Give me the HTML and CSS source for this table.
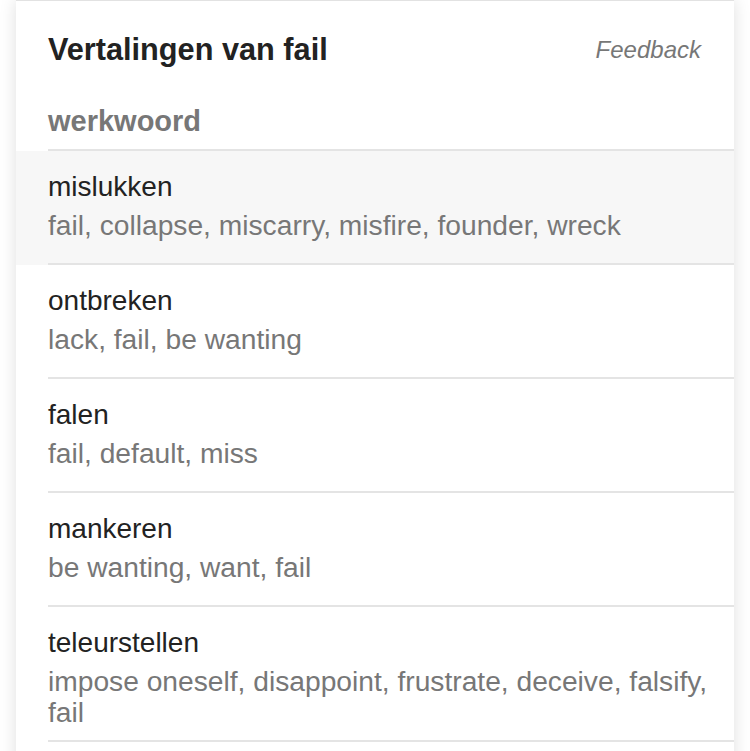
FILE: index.html
```html
<!DOCTYPE html>
<html lang="nl">
<head>
<meta charset="utf-8">
<title>Vertalingen van fail</title>
<link rel="stylesheet" href="styles.css">
</head>
<body>
<div class="page">
  <section class="card">
    <header class="card-head">
      <h1 class="title">Vertalingen van fail</h1>
      <a class="feedback">Feedback</a>
    </header>
    <div class="pos"><div class="pos-label">werkwoord</div></div>
    <ul class="list">
      <li class="row active"><div class="row-inner"><div class="term">mislukken</div><div class="trans">fail, collapse, miscarry, misfire, founder, wreck</div></div></li>
      <li class="row"><div class="row-inner"><div class="term">ontbreken</div><div class="trans">lack, fail, be wanting</div></div></li>
      <li class="row"><div class="row-inner"><div class="term">falen</div><div class="trans">fail, default, miss</div></div></li>
      <li class="row"><div class="row-inner"><div class="term">mankeren</div><div class="trans">be wanting, want, fail</div></div></li>
      <li class="row"><div class="row-inner"><div class="term">teleurstellen</div><div class="trans">impose oneself, disappoint, frustrate, deceive, falsify, fail</div></div></li>
    </ul>
  </section>
</div>
</body>
</html>
```

FILE: styles.css
```css
html, body {
  margin: 0;
  padding: 0;
  background: #fff;
}
body {
  font-family: "Liberation Sans", Arial, Helvetica, sans-serif;
  color: #222;
}
.page {
  padding: 0 16px;
  height: 751px;
  overflow: hidden;
}
.card {
  background: #fff;
  border-top: 1px solid #e2e2e2;
  box-shadow: 0 0 16px rgba(0, 0, 0, 0.13);
  min-height: 800px;
}
.card-head {
  display: flex;
  justify-content: space-between;
  align-items: center;
  padding: 31px 33px 0 32px;
}
.title {
  margin: 0;
  font-size: 30.7px;
  line-height: 36px;
  font-weight: bold;
  color: #222;
}
.feedback {
  font-size: 24px;
  font-style: italic;
  color: #777;
  line-height: 30px;
}
.pos {
  padding-left: 32px;
  margin-top: 35px;
}
.pos-label {
  font-size: 29px;
  font-weight: bold;
  line-height: 36px;
  color: #777;
  padding-bottom: 10px;
  border-bottom: 2px solid #e4e4e4;
}
.list {
  list-style: none;
  margin: 0;
  padding: 0;
}
.row {
  padding-left: 32px;
}
.row.active {
  background: #f7f7f7;
}
.row-inner {
  min-height: 114px;
  box-sizing: border-box;
  padding: 17px 16px 12px 0;
  border-bottom: 2px solid #e4e4e4;
}
.term {
  font-size: 28px;
  line-height: 38px;
  color: #222;
}
.trans {
  font-size: 28.2px;
  line-height: 31px;
  margin-top: 4px;
  color: #777;
}
```
